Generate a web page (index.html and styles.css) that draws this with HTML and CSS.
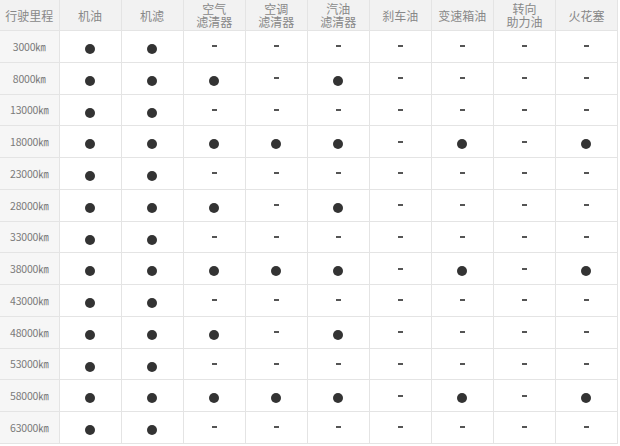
FILE: index.html
```html
<!DOCTYPE html>
<html lang="zh">
<head>
<meta charset="utf-8">
<link rel="stylesheet" href="styles.css">
</head>
<body>
<table class="sched">
<colgroup>
<col class="c-km"><col><col><col><col><col><col><col><col><col>
</colgroup>
<thead>
<tr>
<th>行驶里程</th><th>机油</th><th>机滤</th><th>空气<br>滤清器</th><th>空调<br>滤清器</th><th>汽油<br>滤清器</th><th>刹车油</th><th>变速箱油</th><th>转向<br>助力油</th><th>火花塞</th>
</tr>
</thead>
<tbody id="rows"></tbody>
</table>
<script src="app.js"></script>
</body>
</html>
```
FILE: app.js
```js
const data = [
  ["3000", "110000000"],
  ["8000", "111010000"],
  ["13000", "110000000"],
  ["18000", "111110101"],
  ["23000", "110000000"],
  ["28000", "111010000"],
  ["33000", "110000000"],
  ["38000", "111110101"],
  ["43000", "110000000"],
  ["48000", "111010000"],
  ["53000", "110000000"],
  ["58000", "111110101"],
  ["63000", "110000000"]
];
const tb = document.getElementById("rows");
data.forEach(([km, marks]) => {
  const tr = document.createElement("tr");
  const th = document.createElement("td");
  th.className = "km";
  th.textContent = km + "\u339E";
  tr.appendChild(th);
  for (const m of marks) {
    const td = document.createElement("td");
    const s = document.createElement("span");
    s.className = m === "1" ? "dot" : "dash";
    td.appendChild(s);
    tr.appendChild(td);
  }
  tb.appendChild(tr);
});
```
FILE: styles.css
```css
html, body {
  margin: 0;
  padding: 0;
  background: #fff;
}
.sched {
  border-collapse: collapse;
  table-layout: fixed;
  width: 618px;
  font-family: "Noto Sans CJK SC", "Noto Sans", sans-serif;
  color: #888;
}
.sched col { width: 62px; }
.sched col.c-km { width: 59px; }
.sched th, .sched td {
  border: 1px solid #e4e4e4;
  text-align: center;
  vertical-align: middle;
  padding: 0;
}
.sched th {
  background: #f2f2f2;
  font-weight: normal;
  font-size: 12px;
  line-height: 13px;
  height: 30px;
  border-top: none;
}
.sched th:first-child, .sched td:first-child { border-left: none; }
.sched td { height: 30.75px; background: #fff; }
.sched td.km {
  background: #f6f6f6;
  font-size: 10.5px;
  color: #7a7a7a;
  letter-spacing: -0.2px;
}
.dot {
  display: inline-block;
  width: 10px;
  height: 10px;
  border-radius: 50%;
  background: #333;
  vertical-align: middle;
}
.dash {
  display: block;
  width: 5px;
  height: 2px;
  margin: 0 auto;
  background: #555;
}
```
